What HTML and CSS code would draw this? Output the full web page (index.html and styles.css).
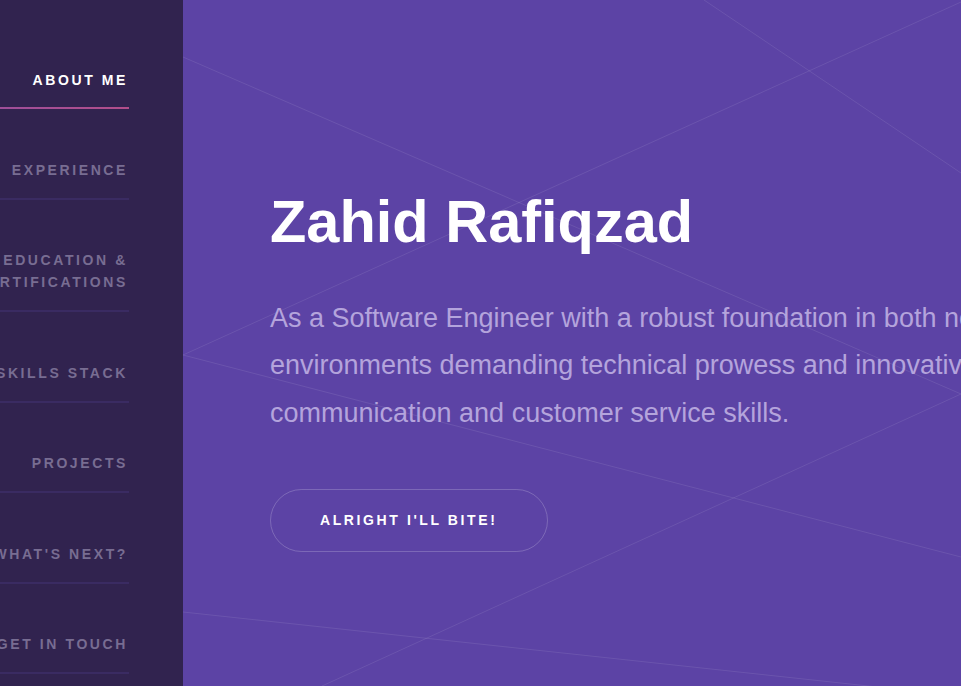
FILE: index.html
```html
<!DOCTYPE html>
<html lang="en">
<head>
<meta charset="utf-8">
<title>Zahid Rafiqzad</title>
<link rel="stylesheet" href="styles.css">
</head>
<body>
<div class="layout">
  <aside class="sidebar">
    <nav class="nav">
      <a class="nav-link active" href="#about">About Me</a>
      <a class="nav-link" href="#experience">Experience</a>
      <a class="nav-link" href="#education">Education &amp; Certifications</a>
      <a class="nav-link" href="#skills">Skills Stack</a>
      <a class="nav-link" href="#projects">Projects</a>
      <a class="nav-link" href="#next">What's Next?</a>
      <a class="nav-link" href="#contact">Get In Touch</a>
    </nav>
  </aside>
  <main class="hero">
    <svg class="hero-lines" width="778" height="686" viewBox="0 0 778 686" aria-hidden="true">
      <line x1="0" y1="57" x2="778" y2="394"/>
      <line x1="521" y1="0" x2="778" y2="173"/>
      <line x1="778" y1="2" x2="0" y2="355"/>
      <line x1="0" y1="355" x2="778" y2="557"/>
      <line x1="778" y1="394" x2="139" y2="686"/>
      <line x1="0" y1="612" x2="778" y2="696"/>
    </svg>
    <div class="hero-content">
      <h1 class="hero-title">Zahid Rafiqzad</h1>
      <p class="hero-text">As a Software Engineer with a robust foundation in both network and systems administration, I thrive in<br>environments demanding technical prowess and innovative problem-solving, complemented by strong<br>communication and customer service skills.</p>
      <a class="hero-btn" href="#experience">Alright I'll bite!</a>
    </div>
  </main>
</div>
</body>
</html>
```

FILE: styles.css
```css
html, body {
  margin: 0;
  padding: 0;
  height: 100%;
  overflow: hidden;
}

body {
  font-family: "Liberation Sans", Arial, sans-serif;
  background: #5c43a5;
}

.layout {
  display: flex;
  height: 686px;
}

.sidebar {
  width: 183px;
  flex: 0 0 183px;
  background: #31234f;
  overflow: hidden;
}

.nav {
  display: flex;
  flex-direction: column;
  width: 201px;
  margin-left: -72px;
  padding-top: 19.5px;
}

.nav-link {
  display: block;
  padding: 49.5px 1px 17px 0;
  border-bottom: 2px solid #3a2b62;
  text-align: right;
  text-decoration: none;
  text-transform: uppercase;
  font-size: 14px;
  line-height: 22px;
  font-weight: 700;
  letter-spacing: 2.6px;
  color: #786d92;
}

.nav-link.active {
  padding-bottom: 16px;
  color: #ffffff;
  border-image: linear-gradient(90deg, #944fa2, #b24e8a) 1;
}

.hero {
  position: relative;
  flex: 1;
  overflow: hidden;
  background: #5c43a5;
}

.hero-lines {
  position: absolute;
  left: 0;
  top: 0;
  z-index: 0;
}

.hero-lines line {
  stroke: rgba(255, 255, 255, 0.09);
  stroke-width: 1;
}

.hero-content {
  position: relative;
  z-index: 1;
  padding: 187px 0 0 87px;
}

.hero-title {
  margin: 0;
  font-size: 59.5px;
  line-height: 69px;
  font-weight: 700;
  color: #ffffff;
  white-space: nowrap;
}

.hero-text {
  margin: 39px 0 0;
  font-size: 27px;
  line-height: 47.25px;
  color: #b4a4dc;
  white-space: nowrap;
}

.hero-btn {
  display: inline-block;
  margin-top: 52.25px;
  padding: 21px 50px 21px 49px;
  border: 1px solid rgba(255, 255, 255, 0.2);
  border-radius: 40px;
  font-size: 14px;
  line-height: 19px;
  font-weight: 700;
  letter-spacing: 2.6px;
  text-transform: uppercase;
  text-decoration: none;
  color: #ffffff;
}
```
